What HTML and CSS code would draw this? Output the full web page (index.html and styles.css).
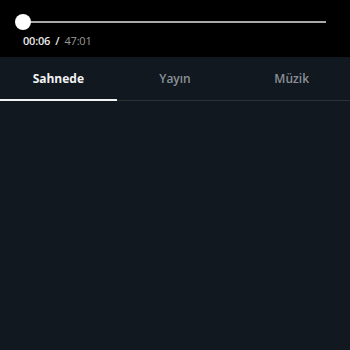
FILE: index.html
```html
<!DOCTYPE html>
<html>
<head>
<meta charset="utf-8">
<link rel="stylesheet" href="styles.css">
</head>
<body>
<div class="player">
  <div class="slider">
    <div class="track"></div>
    <div class="thumb"></div>
  </div>
  <div class="time"><span class="cur">00:06</span><span class="sep">/</span><span class="dur">47:01</span></div>
</div>
<div class="tabs">
  <div class="tab active">Sahnede</div>
  <div class="tab">Yayın</div>
  <div class="tab">Müzik</div>
</div>
<div class="content"></div>
</body>
</html>
```
FILE: styles.css
```css
html, body {
  margin: 0;
  padding: 0;
  width: 350px;
  height: 350px;
  background: #11181f;
  font-family: "Open Sans", "Noto Sans", sans-serif;
  overflow: hidden;
}
.player {
  background: #000;
  height: 57px;
  box-sizing: border-box;
  padding: 14px 24px 0 15px;
}
.slider {
  position: relative;
  height: 16px;
  display: flex;
  align-items: center;
}
.track {
  flex: 1;
  height: 2px;
  margin-left: 8px;
  background: #a9a9a9;
}
.thumb {
  position: absolute;
  left: 0;
  top: 0;
  width: 16px;
  height: 16px;
  border-radius: 50%;
  background: #fff;
}
.time {
  margin-top: 3px;
  margin-left: 8px;
  font-size: 11px;
  line-height: 16px;
  font-weight: 600;
  display: flex;
  gap: 5px;
}
.cur { color: #e8e8e8; letter-spacing: -0.2px; }
.sep { color: #e8e8e8; }
.dur { color: #9a9a9a; font-weight: 400; letter-spacing: -0.2px; }
.tabs {
  display: flex;
  height: 44px;
  border-bottom: 1px solid #2b3238;
  box-sizing: border-box;
}
.tab {
  flex: 1;
  display: flex;
  align-items: center;
  justify-content: center;
  font-size: 12px;
  font-weight: 600;
  color: #8a9096;
  box-sizing: border-box;
}
.tab.active {
  color: #f2f2f2;
  font-weight: 700;
  border-bottom: 2px solid #f2f2f2;
  margin-bottom: -1px;
  padding-top: 1px;
}
```
